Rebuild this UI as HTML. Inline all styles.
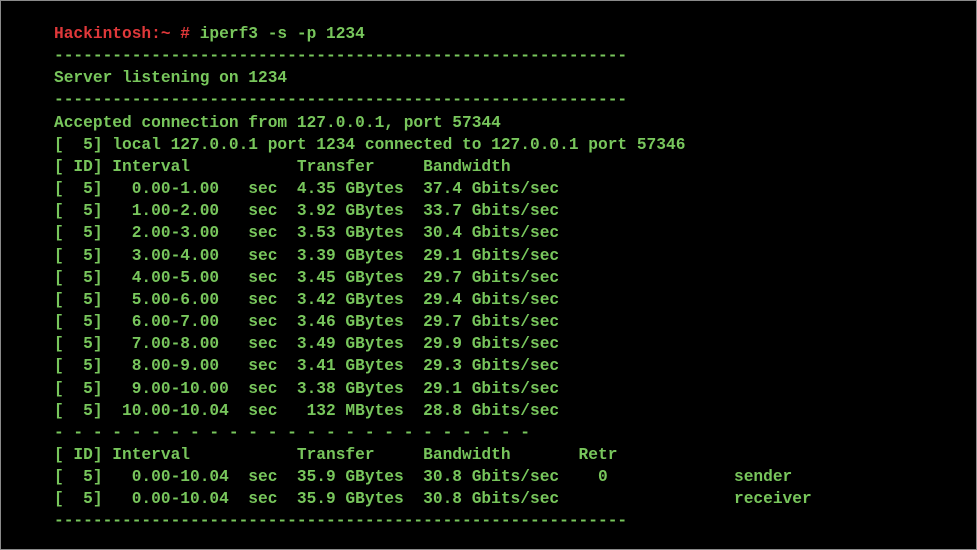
<!DOCTYPE html>
<html><head><style>
html,body{margin:0;padding:0;background:#fff}
.t{position:absolute;left:0;top:0;width:975px;height:548px;background:#000;border:1px solid #8a8a8a}
pre{position:absolute;left:53px;top:22px;margin:0;font-family:"Liberation Mono",monospace;font-weight:bold;font-size:16.2px;line-height:22.15px;color:#78c65c;letter-spacing:0}
.r{color:#e0383a}
</style></head><body><div class="t">
<pre><span class="r">Hackintosh:~ #</span> iperf3 -s -p 1234
-----------------------------------------------------------
Server listening on 1234
-----------------------------------------------------------
Accepted connection from 127.0.0.1, port 57344
[  5] local 127.0.0.1 port 1234 connected to 127.0.0.1 port 57346
[ ID] Interval           Transfer     Bandwidth
[  5]   0.00-1.00   sec  4.35 GBytes  37.4 Gbits/sec
[  5]   1.00-2.00   sec  3.92 GBytes  33.7 Gbits/sec
[  5]   2.00-3.00   sec  3.53 GBytes  30.4 Gbits/sec
[  5]   3.00-4.00   sec  3.39 GBytes  29.1 Gbits/sec
[  5]   4.00-5.00   sec  3.45 GBytes  29.7 Gbits/sec
[  5]   5.00-6.00   sec  3.42 GBytes  29.4 Gbits/sec
[  5]   6.00-7.00   sec  3.46 GBytes  29.7 Gbits/sec
[  5]   7.00-8.00   sec  3.49 GBytes  29.9 Gbits/sec
[  5]   8.00-9.00   sec  3.41 GBytes  29.3 Gbits/sec
[  5]   9.00-10.00  sec  3.38 GBytes  29.1 Gbits/sec
[  5]  10.00-10.04  sec   132 MBytes  28.8 Gbits/sec
- - - - - - - - - - - - - - - - - - - - - - - - -
[ ID] Interval           Transfer     Bandwidth       Retr
[  5]   0.00-10.04  sec  35.9 GBytes  30.8 Gbits/sec    0             sender
[  5]   0.00-10.04  sec  35.9 GBytes  30.8 Gbits/sec                  receiver
-----------------------------------------------------------</pre>
</div></body></html>
